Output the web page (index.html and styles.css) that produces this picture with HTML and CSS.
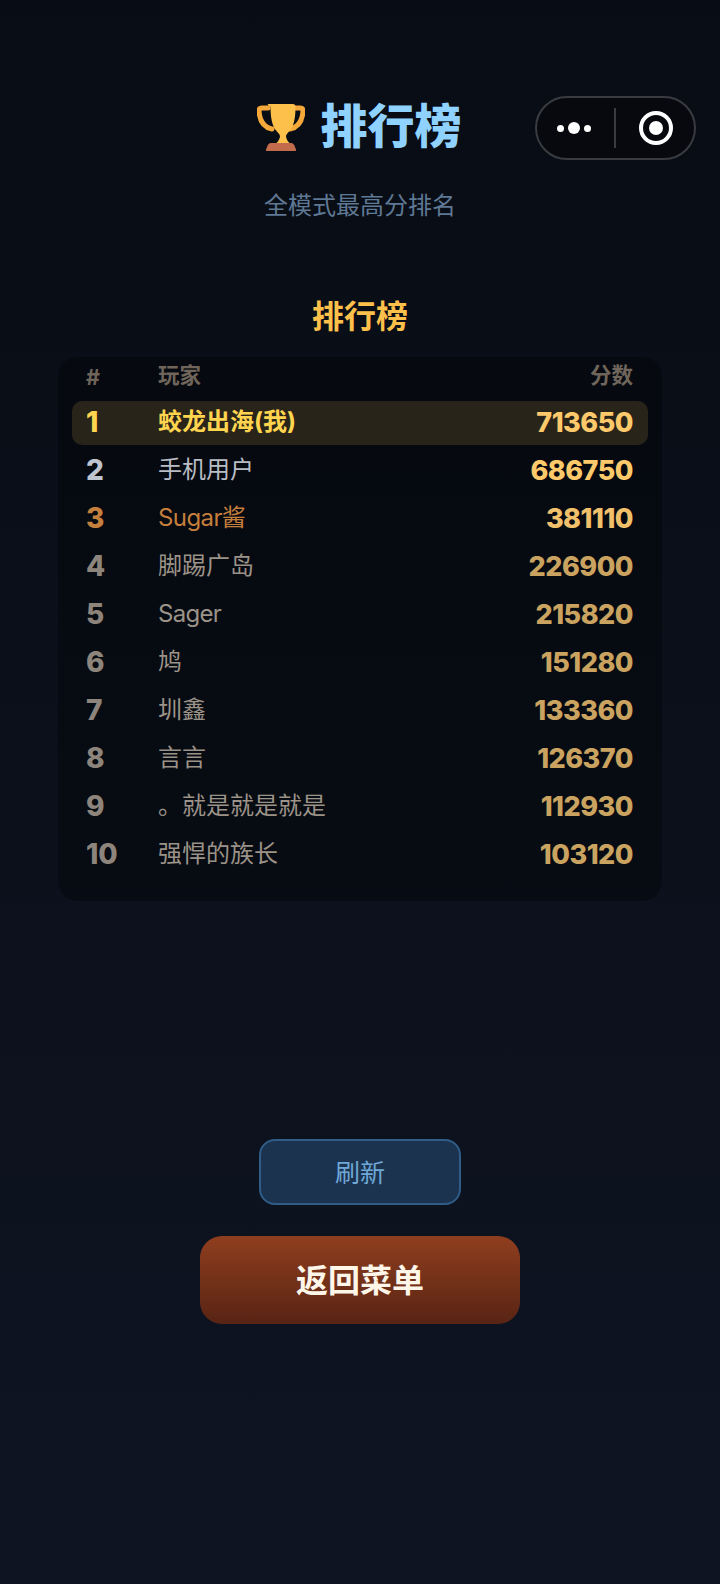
FILE: index.html
```html
<!DOCTYPE html>
<html lang="zh-CN">
<head>
    <meta charset="UTF-8">
    <meta name="viewport" content="width=device-width, initial-scale=1.0">
    <title>排行榜</title>
    <link rel="stylesheet" href="styles.css">
</head>
<body>
    <div class="capsule">
        <div class="capsule-more"><i></i><i class="big"></i><i></i></div>
        <div class="capsule-line"></div>
        <div class="capsule-close"><i></i></div>
    </div>

    <div class="page">
        <div class="title">
            <svg class="trophy" viewBox="0 0 48 48" width="48" height="48">
                <path d="M11 5H5C3 5 2 6 2 8c.5 8 4 16 13 18" fill="none" stroke="#f4a93a" stroke-width="5" stroke-linecap="round"/>
                <path d="M37 5h6c2 0 3 1 3 3-.5 8-4 16-13 18" fill="none" stroke="#f4a93a" stroke-width="5" stroke-linecap="round"/>
                <path d="M12 1h24c1.500 0 2.500 1 2.500 2.500 0 9-1 15-3 20-2 4.500-5.500 6-6.500 9.500 0 2 1 4.500 3.500 7h-13c2.500-2.500 3.500-5 3.500-7-1-3.500-4.500-5-6.500-9.500-2-5-3-11-3-20C9.500 2 10.500 1 12 1z" fill="#fdc04a"/>
                <path d="M14 40h20c2 0 3 1.500 4 4l1 2.500c.3 1-.3 1.500-1 1.500H10c-.7 0-1.300-.5-1-1.500l1-2.500c1-2.500 2-4 4-4z" fill="#c26c4c"/>
            </svg>
            <h1>排行榜</h1>
        </div>
        <p class="subtitle">全模式最高分排名</p>

        <h2>排行榜</h2>
        <div class="board">
            <div class="row head">
                <span>#</span>
                <span class="name">玩家</span>
                <span class="score">分数</span>
            </div>
            <div class="row me">
                <span class="rank">1</span>
                <span class="name">蛟龙出海(我)</span>
                <span class="score">713650</span>
            </div>
            <div class="row second">
                <span class="rank">2</span>
                <span class="name">手机用户</span>
                <span class="score">686750</span>
            </div>
            <div class="row third">
                <span class="rank">3</span>
                <span class="name">Sugar酱</span>
                <span class="score">381110</span>
            </div>
            <div class="row">
                <span class="rank">4</span>
                <span class="name">脚踢广岛</span>
                <span class="score">226900</span>
            </div>
            <div class="row">
                <span class="rank">5</span>
                <span class="name latin">Sager</span>
                <span class="score">215820</span>
            </div>
            <div class="row">
                <span class="rank">6</span>
                <span class="name">鸠</span>
                <span class="score">151280</span>
            </div>
            <div class="row">
                <span class="rank">7</span>
                <span class="name">圳鑫</span>
                <span class="score">133360</span>
            </div>
            <div class="row">
                <span class="rank">8</span>
                <span class="name">言言</span>
                <span class="score">126370</span>
            </div>
            <div class="row">
                <span class="rank">9</span>
                <span class="name">。就是就是就是</span>
                <span class="score">112930</span>
            </div>
            <div class="row">
                <span class="rank">10</span>
                <span class="name">强悍的族长</span>
                <span class="score">103120</span>
            </div>
        </div>

        <button class="refresh">刷新</button>
        <button class="back">返回菜单</button>
    </div>
</body>
</html>
```

FILE: styles.css
```css
* {
    box-sizing: border-box;
}
body {
    margin: 0;
    height: 1584px;
    overflow: hidden;
    position: relative;
    font-family: "Inter", "Noto Sans CJK SC", sans-serif;
    background: linear-gradient(180deg, #080c14 0%, #0e1422 100%);
}
.page {
    display: flex;
    flex-direction: column;
    align-items: center;
    padding-top: 103px;
}
.title {
    display: flex;
    align-items: center;
    height: 48px;
    gap: 16px;
    margin-left: -2px;
}
.title h1 {
    margin: 0;
    padding-bottom: 2px;
    font-size: 47px;
    line-height: 48px;
    font-weight: 900;
    color: #8fd2ff;
}
.trophy {
    display: block;
}
.subtitle {
    margin: 37px 0 0;
    font-size: 24px;
    line-height: 36px;
    color: #5f7894;
}
h2 {
    margin: 71px 0 0;
    font-size: 32px;
    line-height: 44px;
    font-weight: 700;
    color: #fdc04a;
}
.board {
    width: 604px;
    height: 544px;
    margin-top: 18px;
    padding: 0 14px;
    border-radius: 20px;
    background: rgba(0, 0, 0, 0.3);
    display: flex;
    flex-direction: column;
    gap: 4px;
}
.row {
    display: grid;
    grid-template-columns: 72px 1fr auto;
    align-items: center;
    height: 44px;
    padding: 0 15px 0 14px;
    border-radius: 10px;
    color: #9c9388;
    font-size: 24px;
}
.row .name {
    padding-bottom: 7px;
}
.row .name.latin {
    padding-bottom: 3px;
    letter-spacing: -0.7px;
}
.row .rank {
    padding-bottom: 2px;
    font-size: 28px;
    font-weight: 800;
    color: #8d857b;
}
.row .score {
    padding-bottom: 2px;
    font-size: 27px;
    font-weight: 800;
    letter-spacing: -0.5px;
    color: #c9a35f;
    text-align: right;
}
.row.head {
    height: 40px;
    font-size: 21.500px;
    font-weight: 700;
    color: #6f655a;
}
.row.head .score {
    padding-bottom: 7px;
    font-size: 21.500px;
    font-weight: 700;
    letter-spacing: 0;
    color: #6f655a;
}
.row.me {
    background: #28241a;
}
.row.me .rank,
.row.me .name {
    color: #ffd54f;
    font-weight: 700;
}
.row.me .rank {
    font-weight: 800;
}
.row.me .score {
    color: #fdc96a;
}
.row.second .rank {
    color: #bfc4ce;
}
.row.second .name {
    color: #b9bdc5;
}
.row.second .score {
    color: #fdc96a;
}
.row.third .rank,
.row.third .name {
    color: #c57f3c;
}
.row.third .name {
    letter-spacing: -0.6px;
}
.row.third .score {
    color: #f0c06a;
}
button {
    display: block;
    font-family: inherit;
    padding: 0;
}
.refresh {
    width: 202px;
    height: 66px;
    margin-top: 238px;
    padding-bottom: 2px;
    border: 2px solid #2f5d85;
    border-radius: 16px;
    background: #1c3350;
    color: #6fa8d6;
    font-size: 25px;
}
.back {
    width: 320px;
    height: 88px;
    margin-top: 31px;
    padding-bottom: 4px;
    border: 0;
    border-radius: 22px;
    background: linear-gradient(180deg, #8f3e1e 0%, #582414 100%);
    color: #fff6ea;
    font-size: 32px;
    font-weight: 700;
}
/* wechat capsule sits over the page */
.capsule {
    position: absolute;
    left: 535px;
    top: 96px;
    width: 161px;
    height: 64px;
    border: 2px solid #3a3b40;
    border-radius: 32px;
    background: #07090e;
    display: flex;
    align-items: center;
}
.capsule-more {
    width: 77px;
    padding-right: 3px;
    display: flex;
    justify-content: center;
    align-items: center;
    gap: 4px;
}
.capsule-more i {
    width: 7px;
    height: 7px;
    border-radius: 50%;
    background: #fff;
}
.capsule-more i.big {
    width: 12px;
    height: 12px;
}
.capsule-line {
    width: 2px;
    height: 40px;
    background: #3a3b40;
}
.capsule-close {
    flex: 1;
    padding-left: 2px;
    display: flex;
    justify-content: center;
}
.capsule-close i {
    width: 34px;
    height: 34px;
    border: 4px solid #fff;
    border-radius: 50%;
    display: flex;
    align-items: center;
    justify-content: center;
}
.capsule-close i::after {
    content: "";
    width: 14px;
    height: 14px;
    border-radius: 50%;
    background: #fff;
}
```
